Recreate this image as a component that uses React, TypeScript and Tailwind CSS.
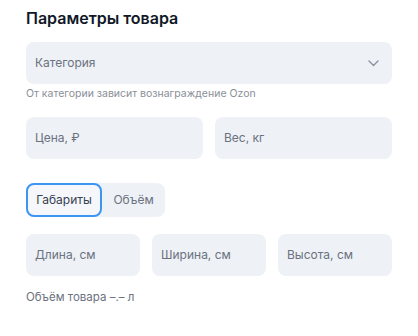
import { useState } from "react"

function Field({ label }: { label: string }) {
  return (
    <div className="flex h-[42px] items-center rounded-lg bg-[#eef1f6] px-[9px] text-[12px] text-[#6b7280]">
      {label}
    </div>
  )
}

export default function App() {
  const [tab, setTab] = useState<"size" | "volume">("size")

  return (
    <div className="h-[336px] w-[418px] bg-white px-[26px] pt-[6px] font-['Inter','Noto_Sans',sans-serif]">
      <div className="text-[16px] font-semibold leading-[24px] text-[#111827]">Параметры товара</div>

      <div className="mt-[12px] flex h-[42px] items-center justify-between rounded-lg bg-[#eef1f6] pl-[9px] pr-[13px] text-[12px] text-[#6b7280]">
        <span>Категория</span>
        <svg width="11" height="7" viewBox="0 0 11 7" fill="none">
          <path d="M1 1l4.5 4.5L10 1" stroke="#8b929c" strokeWidth="1.4" strokeLinecap="round" strokeLinejoin="round" />
        </svg>
      </div>
      <div className="mt-[3px] text-[10.5px] leading-[14px] text-[#8a8f98]">От категории зависит вознаграждение Ozon</div>

      <div className="mt-[16px] grid grid-cols-2 gap-[12px]">
        <Field label="Цена, ₽" />
        <Field label="Вес, кг" />
      </div>

      <div className="mt-[24px] flex w-[139px] rounded-lg bg-[#eef1f6] text-[12px]">
        <button
          type="button"
          onClick={() => setTab("size")}
          className={
            tab === "size"
              ? "h-[34px] w-[76px] rounded-lg border-2 border-[#3d95f2] bg-[#f5f7fb] text-[#374151]"
              : "h-[34px] w-[76px] rounded-lg text-[#6b7280]"
          }
        >
          Габариты
        </button>
        <button
          type="button"
          onClick={() => setTab("volume")}
          className={
            tab === "volume"
              ? "h-[34px] flex-1 rounded-lg border-2 border-[#3d95f2] bg-[#f5f7fb] text-[#374151]"
              : "h-[34px] flex-1 rounded-lg text-[#6b7280]"
          }
        >
          Объём
        </button>
      </div>

      <div className="mt-[17px] grid grid-cols-3 gap-[12px]">
        <Field label="Длина, см" />
        <Field label="Ширина, см" />
        <Field label="Высота, см" />
      </div>

      <div className="mt-[13px] text-[11.5px] leading-[16px] text-[#6b7280]">Объём товара –.– л</div>
    </div>
  )
}
